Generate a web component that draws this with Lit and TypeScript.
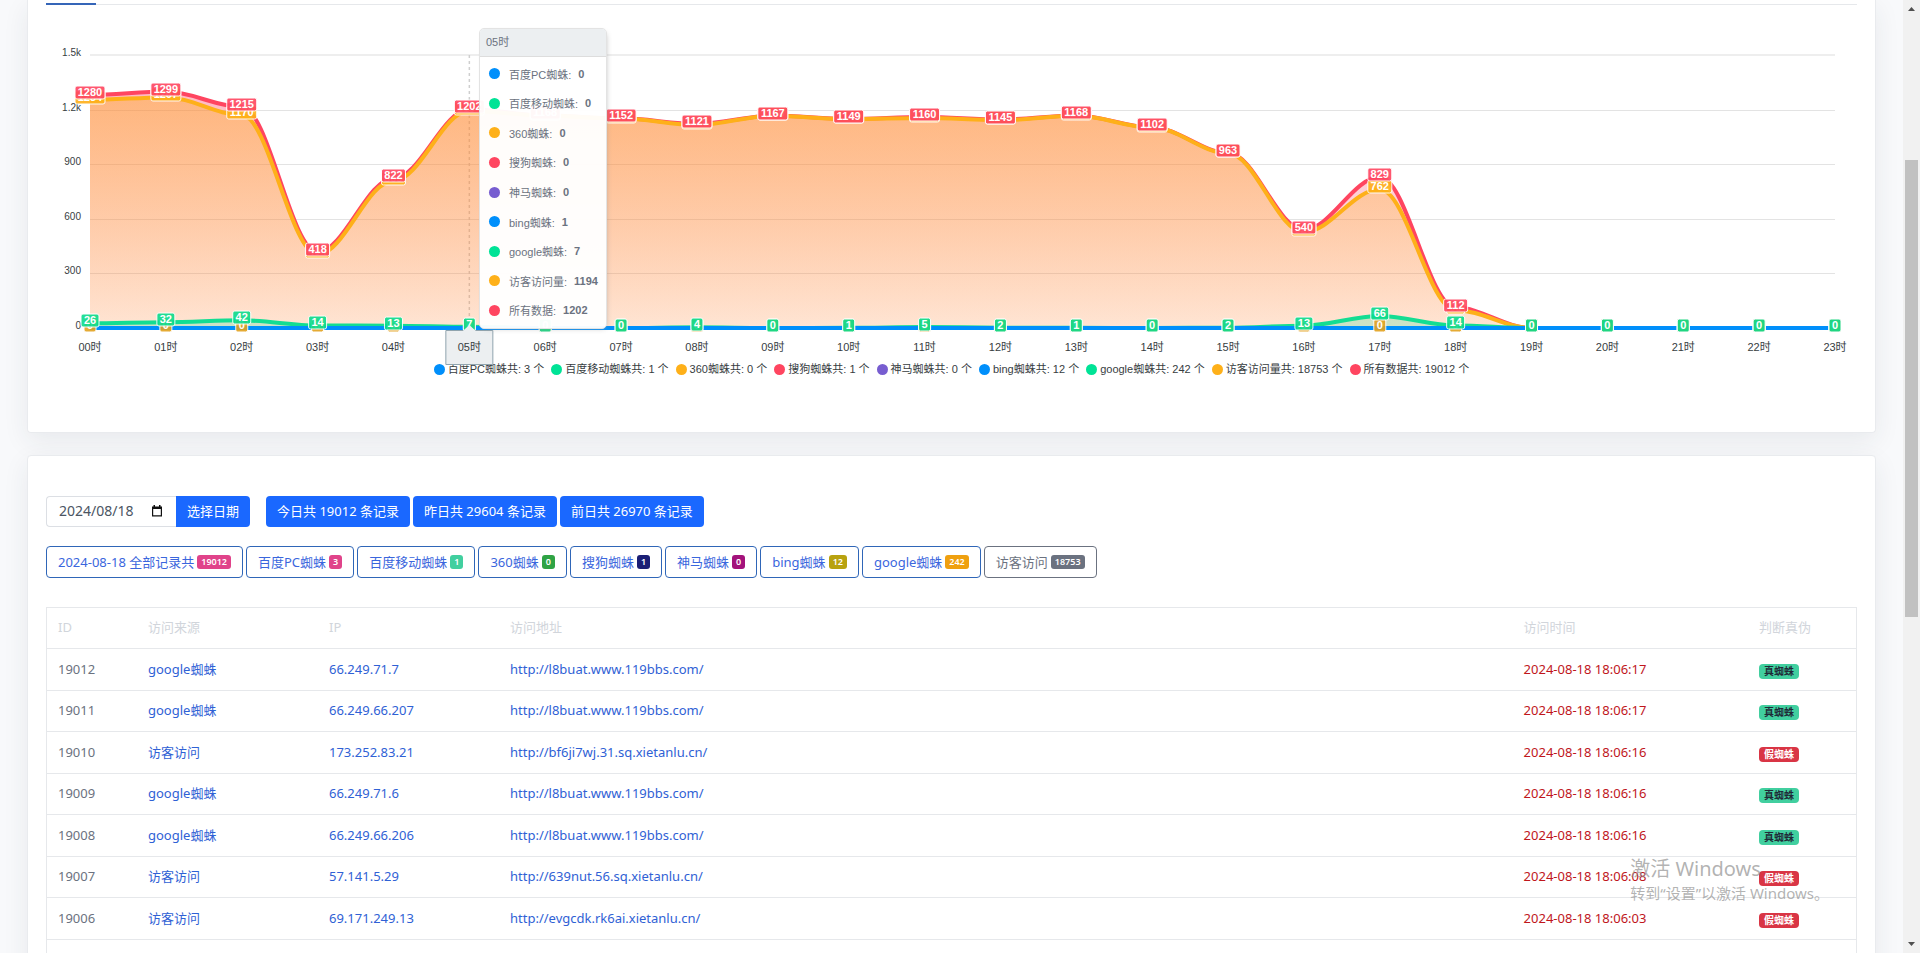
import { LitElement, html, svg, css } from "lit";
import { customElement, state, property } from "lit/decorators.js";

const BLUE = "#008ffb";
const GREEN = "#00e396";
const AMBER = "#feb019";
const RED = "#ff4560";
const PURPLE = "#775dd0";

const TOTAL = [1280, 1299, 1215, 418, 822, 1202, 1168, 1152, 1121, 1167, 1149, 1160, 1145, 1168, 1102, 963, 540, 829, 112, 0, 0, 0, 0, 0];
const VISITORS = [1254, 1267, 1170, 404, 809, 1194, 1166, 1151, 1116, 1166, 1147, 1154, 1142, 1166, 1101, 960, 526, 762, 98, 0, 0, 0, 0, 0];
const GOOGLE = [26, 32, 42, 14, 13, 7, 0, 0, 4, 0, 1, 5, 2, 1, 0, 2, 13, 66, 14, 0, 0, 0, 0, 0];
const HOURS = TOTAL.map((_, i) => `${String(i).padStart(2, "0")}时`);
const ACTIVE = 5;

const SERIES = [
  { name: "百度PC蜘蛛", total: 3, now: 0, color: BLUE },
  { name: "百度移动蜘蛛", total: 1, now: 0, color: GREEN },
  { name: "360蜘蛛", total: 0, now: 0, color: AMBER },
  { name: "搜狗蜘蛛", total: 1, now: 0, color: RED },
  { name: "神马蜘蛛", total: 0, now: 0, color: PURPLE },
  { name: "bing蜘蛛", total: 12, now: 1, color: BLUE },
  { name: "google蜘蛛", total: 242, now: 7, color: GREEN },
  { name: "访客访问量", total: 18753, now: 1194, color: AMBER },
  { name: "所有数据", total: 19012, now: 1202, color: RED },
];

const FONT = css`"Noto Sans", "Noto Sans CJK SC", sans-serif`;
const CHART_FONT = css`"Liberation Sans", "Noto Sans CJK SC", sans-serif`;

@customElement("hour-chart")
class HourChart extends LitElement {
  @state() private width = 1811;
  private observer?: ResizeObserver;

  static styles = css`
    :host { display: block; font-family: ${CHART_FONT}; color: #373d3f; }
    .plot { position: relative; }
    svg { display: block; width: 100%; height: 353px; overflow: visible; }
    .ylabel { font-size: 10px; fill: #373d3f; text-anchor: end; }
    .xlabel { font-size: 11px; fill: #373d3f; text-anchor: middle; }
    .value { font-size: 11px; font-weight: 700; fill: #fff; text-anchor: middle; }
    .legend { display: flex; flex-wrap: wrap; justify-content: center; gap: 0 7px; margin: 0; padding: 0; list-style: none; font-size: 11px; line-height: 22px; }
    .legend li { display: flex; align-items: center; gap: 3px; white-space: pre; }
    .dot { flex: none; width: 11px; height: 11px; border-radius: 50%; }
    .tip { position: absolute; top: 23px; box-sizing: border-box; width: 128px; height: 301px; display: flex; flex-direction: column; border: 1px solid #e3e3e3; border-radius: 5px; background: rgba(255, 255, 255, 0.96); box-shadow: 2px 2px 6px -4px #999; overflow: hidden; font-size: 11px; color: #6b7280; white-space: nowrap; }
    .tip-title { padding: 0 6px; line-height: 27px; background: #eceff1; border-bottom: 1px solid #ddd; }
    .tip-rows { flex: 1; display: flex; flex-direction: column; padding: 2px 9px 3px; }
    .tip-row { flex: 1; display: flex; align-items: center; }
    .tip-name { margin: 0 7px 0 9px; }
  `;

  connectedCallback() {
    super.connectedCallback();
    this.observer = new ResizeObserver(([e]) => {
      if (e.contentRect.width > 0) this.width = e.contentRect.width;
    });
    this.observer.observe(this);
  }

  disconnectedCallback() {
    this.observer?.disconnect();
    super.disconnectedCallback();
  }

  private x(i: number) {
    return 44 + (i * (this.width - 66)) / (HOURS.length - 1);
  }

  private y(v: number) {
    return 323 - v * 0.182;
  }

  private line(data: number[]) {
    const reach = (this.x(1) - this.x(0)) * 0.35;
    return data
      .map((v, i) =>
        i === 0
          ? `M${this.x(0)} ${this.y(v)}`
          : `C${this.x(i - 1) + reach} ${this.y(data[i - 1])} ${this.x(i) - reach} ${this.y(v)} ${this.x(i)} ${this.y(v)}`
      )
      .join("");
  }

  private area(data: number[]) {
    return `${this.line(data)}L${this.x(data.length - 1)} 323L${this.x(0)} 323Z`;
  }

  private labels(data: number[], color: string) {
    return data.map((v, i) => {
      const w = String(v).length * 6 + 6;
      const y = Math.round(this.y(v));
      return svg`
        <rect x=${this.x(i) - w / 2} y=${y - 9} width=${w} height="13" rx="2"
          fill=${color} stroke="#fff" stroke-width="1" opacity="0.9"></rect>
        <text class="value" x=${this.x(i)} y=${y + 1}>${v}</text>`;
    });
  }

  render() {
    const left = this.x(0);
    const right = this.x(HOURS.length - 1);
    const cx = this.x(ACTIVE);
    const ticks: [string, number][] = [["1.5k", 1500], ["1.2k", 1200], ["900", 900], ["600", 600], ["300", 300], ["0", 0]];
    return html`
      <div class="plot">
        <svg role="img" aria-label="每小时访问量">
          <defs>
            <linearGradient id="gr" x1="0" y1="85" x2="0" y2="323" gradientUnits="userSpaceOnUse">
              <stop offset="0" stop-color=${RED} stop-opacity="0.38"></stop>
              <stop offset="1" stop-color=${RED} stop-opacity="0.1"></stop>
            </linearGradient>
            <linearGradient id="ga" x1="0" y1="85" x2="0" y2="323" gradientUnits="userSpaceOnUse">
              <stop offset="0" stop-color=${AMBER} stop-opacity="0.42"></stop>
              <stop offset="1" stop-color=${AMBER} stop-opacity="0.13"></stop>
            </linearGradient>
          </defs>
          ${ticks.map(
            ([t, v]) => svg`
              <rect x=${left} y=${Math.round(this.y(v)) - (v === 1500 ? 1 : 0)} width=${right - left}
                height=${v === 1500 ? 2 : 1} fill=${v === 1500 ? "#eeeeee" : "#e3e3e3"}></rect>
              <text class="ylabel" x=${left - 9} y=${Math.round(this.y(v)) + 1}>${t}</text>`
          )}
          <line x1=${cx} x2=${cx} y1="50" y2="323" stroke="#cfcfcf" stroke-width="1.5" stroke-dasharray="3"></line>
          <path d=${this.area(TOTAL)} fill="url(#gr)"></path>
          <path d=${this.line(TOTAL)} fill="none" stroke=${RED} stroke-width="4"></path>
          <path d=${this.area(VISITORS)} fill="url(#ga)"></path>
          <path d=${this.line(VISITORS)} fill="none" stroke=${AMBER} stroke-width="4"></path>
          <path d=${this.area(GOOGLE)} fill=${GREEN} fill-opacity="0.2"></path>
          <path d=${this.line(GOOGLE)} fill="none" stroke="#13dd92" stroke-width="4"></path>
          <path d=${`M${left} 323H${right}`} fill="none" stroke=${BLUE} stroke-width="4"></path>
          ${this.labels(VISITORS, AMBER)}
          ${this.labels(TOTAL, RED)}
          ${this.labels(HOURS.map(() => 0), "#e3a21f")}
          ${this.labels(GOOGLE, "#0bdc8c")}
          <path d=${`M${cx - 23.5} 325.5H${cx - 6}L${cx} 320L${cx + 6} 325.5H${cx + 23.5}V359.5H${cx - 23.5}Z`}
            fill="#eceff1"></path>
          <path d=${`M${cx - 6} 325.5H${cx - 23.5}V359.5H${cx + 23.5}V325.5H${cx + 6}`}
            fill="none" stroke="#90a4ae" stroke-width="1"></path>
          ${HOURS.map((h, i) => svg`<text class="xlabel" x=${this.x(i)} y="346">${h}</text>`)}
        </svg>
        <div class="tip" style="left:${Math.round(cx + 10)}px">
          <div class="tip-title">${HOURS[ACTIVE]}</div>
          <div class="tip-rows">
            ${SERIES.map(
              (s) => html`<div class="tip-row">
                <span class="dot" style="background:${s.color}"></span>
                <span class="tip-name">${s.name}:</span><b>${s.now}</b>
              </div>`
            )}
          </div>
        </div>
      </div>
      <ul class="legend">
        ${SERIES.map(
          (s) => html`<li><span class="dot" style="background:${s.color}"></span><span>${s.name}共: ${s.total} 个</span></li>`
        )}
      </ul>
    `;
  }
}

interface Visit {
  id: number;
  from: string;
  ip: string;
  url: string;
  time: string;
  real: boolean;
}

const VISITS: Visit[] = [
  { id: 19012, from: "google蜘蛛", ip: "66.249.71.7", url: "http://l8buat.www.119bbs.com/", time: "2024-08-18 18:06:17", real: true },
  { id: 19011, from: "google蜘蛛", ip: "66.249.66.207", url: "http://l8buat.www.119bbs.com/", time: "2024-08-18 18:06:17", real: true },
  { id: 19010, from: "访客访问", ip: "173.252.83.21", url: "http://bf6ji7wj.31.sq.xietanlu.cn/", time: "2024-08-18 18:06:16", real: false },
  { id: 19009, from: "google蜘蛛", ip: "66.249.71.6", url: "http://l8buat.www.119bbs.com/", time: "2024-08-18 18:06:16", real: true },
  { id: 19008, from: "google蜘蛛", ip: "66.249.66.206", url: "http://l8buat.www.119bbs.com/", time: "2024-08-18 18:06:16", real: true },
  { id: 19007, from: "访客访问", ip: "57.141.5.29", url: "http://639nut.56.sq.xietanlu.cn/", time: "2024-08-18 18:06:08", real: false },
  { id: 19006, from: "访客访问", ip: "69.171.249.13", url: "http://evgcdk.rk6ai.xietanlu.cn/", time: "2024-08-18 18:06:03", real: false },
];

@customElement("visit-table")
class VisitTable extends LitElement {
  @property({ attribute: false }) rows: Visit[] = [];

  static styles = css`
    :host { display: block; }
    table { width: 100%; table-layout: fixed; border-collapse: collapse; border: 1px solid #e6e8eb; font-size: 13px; line-height: 20px; color: #6b7280; }
    th, td { box-sizing: border-box; height: 42px; padding: 0 11px 2px; text-align: left; font-weight: 400; border-bottom: 1px solid #e6e8eb; white-space: nowrap; }
    th, tr:nth-child(even) td { height: 41px; }
    th { color: #d1d5db; }
    .c-id { width: 5%; }
    .c-from { width: 10%; }
    .c-ip { width: 10%; }
    .c-time { width: 13%; }
    .c-real { width: 6%; }
    a { color: #2f61d5; text-decoration: none; }
    .time { color: #c0161c; }
    .verdict { padding-bottom: 0; }
    .tag { display: inline-block; vertical-align: middle; padding: 0 5px; border-radius: 4px; font-size: 10px; font-weight: 700; line-height: 15px; background: #41cf9f; color: #1f2937; }
    .fake { background: #d93545; color: #fff; }
  `;

  render() {
    return html`
      <table>
        <colgroup>
          <col class="c-id" /><col class="c-from" /><col class="c-ip" /><col />
          <col class="c-time" /><col class="c-real" />
        </colgroup>
        <thead>
          <tr><th>ID</th><th>访问来源</th><th>IP</th><th>访问地址</th><th>访问时间</th><th>判断真伪</th></tr>
        </thead>
        <tbody>
          ${this.rows.map(
            (r) => html`<tr>
              <td>${r.id}</td>
              <td><a href="#">${r.from}</a></td>
              <td><a href="#">${r.ip}</a></td>
              <td><a href=${r.url}>${r.url}</a></td>
              <td class="time">${r.time}</td>
              <td class="verdict"><span class="tag ${r.real ? "" : "fake"}">${r.real ? "真" : "假"}蜘蛛</span></td>
            </tr>`
          )}
          <tr><td colspan="6"></td></tr>
        </tbody>
      </table>
    `;
  }
}

const DAYS = ["今日共 19012 条记录", "昨日共 29604 条记录", "前日共 26970 条记录"];
const FILTERS: [string, number, string][] = [
  ["2024-08-18 全部记录共", 19012, "#e0438a"],
  ["百度PC蜘蛛", 3, "#e0438a"],
  ["百度移动蜘蛛", 1, "#41cf9f"],
  ["360蜘蛛", 0, "#2fa344"],
  ["搜狗蜘蛛", 1, "#1b1f75"],
  ["神马蜘蛛", 0, "#a3127b"],
  ["bing蜘蛛", 12, "#b8a20f"],
  ["google蜘蛛", 242, "#efa00f"],
  ["访客访问", 18753, "#6b7280"],
];

@customElement("app-root")
class AppRoot extends LitElement {
  static styles = css`
    :host { display: flex; height: 100vh; overflow: hidden; background: #f8f9fb; font-family: ${FONT}; font-size: 13px; }
    * { box-sizing: border-box; }
    button, input { font-family: inherit; margin: 0; }
    main { flex: 1; min-width: 0; display: flex; flex-direction: column; gap: 22px; padding: 0 27px; }
    .card { flex: none; padding: 0 18px; background: #fff; border: 1px solid #e9ebee; border-radius: 4px; box-shadow: 0 8px 26px rgba(40, 50, 70, 0.08); }
    .chart { padding-bottom: 52px; border-top: 0; border-radius: 0 0 4px 4px; }
    .tabs { display: flex; height: 5px; padding-top: 3px; background: linear-gradient(#e6e8eb, #e6e8eb) 0 4px / 100% 1px no-repeat; }
    .tab { width: 50px; height: 2px; background: #3565b8; }
    .records { padding-top: 40px; }
    .bar { display: flex; gap: 3px; margin-bottom: 19px; }
    .picker { display: flex; margin-right: 13px; }
    .date { display: flex; align-items: center; width: 130px; height: 31px; padding: 0 14px 2px 12px; border: 1px solid #dcdfe4; border-right: 0; border-radius: 4px 0 0 4px; }
    .date input { flex: 1; min-width: 0; padding: 0; border: 0; outline: 0; background: none; color: #4b5563; font-size: 14px; line-height: 20px; }
    .icon { display: block; width: 10px; height: 12px; }
    .primary { height: 31px; padding: 0 11px 2px; border: 0; border-radius: 4px; background: #1a68ff; color: #fff; font-size: 13px; line-height: 20px; white-space: nowrap; }
    .join { border-radius: 0 4px 4px 0; }
    .filters { display: flex; flex-wrap: wrap; gap: 3px; margin-bottom: 29px; }
    .filter { display: flex; align-items: center; gap: 3px; height: 32px; padding: 0 11px; border: 1px solid #2f66b8; border-radius: 4px; background: #fff; color: #3a66dd; font-size: 13px; line-height: 20px; white-space: nowrap; }
    .muted { border-color: #6b7280; color: #6b7280; }
    .count { padding: 0 4px; border-radius: 3px; color: #fff; font-size: 9px; font-weight: 600; line-height: 14px; }
    .scroll { flex: none; width: 17px; display: flex; flex-direction: column; align-items: center; justify-content: space-between; background: #f1f1f1; }
    .arrow { display: block; width: 17px; height: 17px; fill: #505050; }
    .track { flex: 1; width: 13px; display: flex; flex-direction: column; }
    .before { flex: 143; }
    .thumb { flex: 457; background: #c1c1c1; }
    .after { flex: 319; }
    .notice { position: absolute; right: 91px; bottom: 49px; color: rgba(145, 145, 145, 0.7); font-size: 15px; line-height: 22px; pointer-events: none; white-space: nowrap; }
    .notice-title { font-size: 20px; line-height: 26px; }
  `;

  render() {
    return html`
      <main>
        <section class="card chart">
          <div class="tabs"><div class="tab"></div></div>
          <hour-chart></hour-chart>
        </section>
        <section class="card records">
          <div class="bar">
            <form class="picker" @submit=${(e: Event) => e.preventDefault()}>
              <label class="date">
                <input type="text" value="2024/08/18" aria-label="日期" />
                <svg class="icon" viewBox="0 0 10 12">
                  <path d="M1.500 0h1.500v1.500h4V0h1.500v1.500H10V11.500H0V1.500h1.500zM1.200 4v6.300h7.600V4z" fill="#111" fill-rule="evenodd"></path>
                </svg>
              </label>
              <button class="primary join">选择日期</button>
            </form>
            ${DAYS.map((d) => html`<button class="primary">${d}</button>`)}
          </div>
          <div class="filters">
            ${FILTERS.map(
              ([name, n, color], i) => html`<button class="filter ${i === FILTERS.length - 1 ? "muted" : ""}">
                ${name}<span class="count" style="background:${color}">${n}</span>
              </button>`
            )}
          </div>
          <visit-table .rows=${VISITS}></visit-table>
        </section>
      </main>
      <div class="scroll">
        <svg class="arrow" viewBox="0 0 17 17"><path d="M5 11h7L8.500 7z"></path></svg>
        <div class="track"><div class="before"></div><div class="thumb"></div><div class="after"></div></div>
        <svg class="arrow" viewBox="0 0 17 17"><path d="M5 6h7L8.500 10z"></path></svg>
      </div>
      <div class="notice">
        <div class="notice-title">激活 Windows</div>
        <div>转到“设置”以激活 Windows。</div>
      </div>
    `;
  }
}
